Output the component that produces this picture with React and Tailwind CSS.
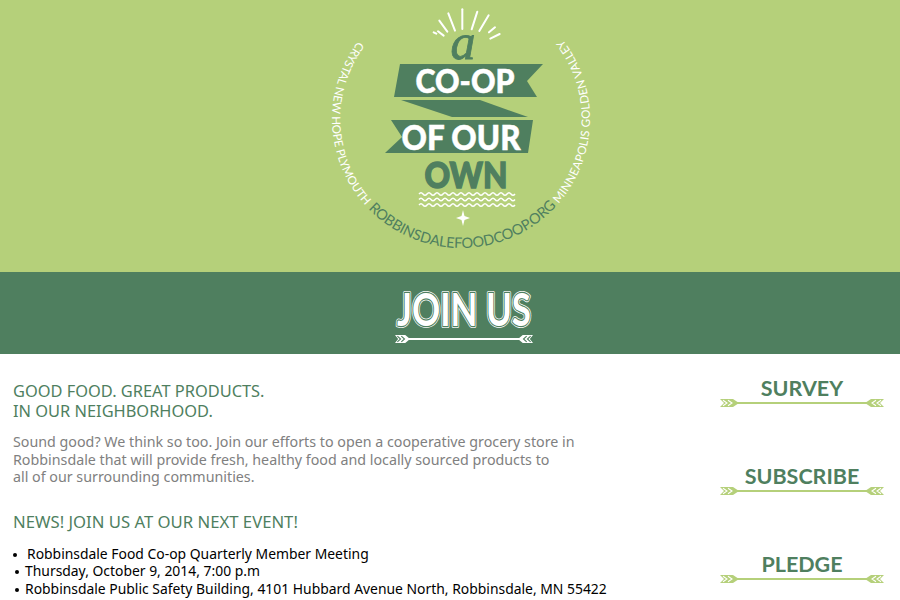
const GREEN = "#4f7f5f"
const LIME = "#b5d07a"

const rays = [
  [427, 28, 427, 87], [385, 40, 405, 92], [358, 62, 382, 95], [341, 97, 349, 101], [354, 94, 371, 107],
  [472, 35, 455, 88], [506, 46, 478, 93], [525, 82, 507, 97], [539, 102, 511, 116],
]

const waves = [194, 199.5, 205].map((y) => {
  let d = `M419 ${y}`
  for (let x = 419; x < 511; x += 8) d += ` q2 -2.6 4 0 t4 0`
  return d
})

function Logo() {
  return (
    <svg viewBox="300 0 300 272" className="w-[300px] h-[272px] mx-auto">
      <defs>
        <path id="ring" d="M358 41.4 A129 129 0 1 0 556.9 32.7" />
      </defs>
      <g transform="translate(320 0) scale(0.3333)">
        {rays.map((r, i) => (
          <line key={i} x1={r[0]} y1={r[1]} x2={r[2]} y2={r[3]} stroke="#fff" strokeWidth="6" strokeLinecap="round" />
        ))}
      </g>
      <text x="463" y="59" textAnchor="middle" fontFamily="'Liberation Serif', serif" fontStyle="italic" fontSize="50" fill={GREEN} stroke={GREEN} strokeWidth="0.8">a</text>

      <polygon points="400,64 543,64 527,81 537,97 394,97" fill={GREEN} />
      <polygon points="401,100 480,100 528,117 452,117" fill={GREEN} />
      <polygon points="391,120 533,120 528,153 385,153 402,137" fill={GREEN} />

      <text x="465" y="93" textAnchor="middle" fontFamily="Lato, sans-serif" fontWeight="900" fontSize="32" fill="#fff" stroke="#fff" strokeWidth="0.5" textLength="99" lengthAdjust="spacingAndGlyphs">CO-OP</text>
      <text x="461" y="150" textAnchor="middle" fontFamily="Lato, sans-serif" fontWeight="900" fontSize="34" fill="#fff" stroke="#fff" strokeWidth="0.5" textLength="119" lengthAdjust="spacingAndGlyphs">OF OUR</text>
      <text x="466" y="188" textAnchor="middle" fontFamily="Lato, sans-serif" fontWeight="900" fontSize="36" fill={GREEN} stroke={GREEN} strokeWidth="1.4" textLength="83" lengthAdjust="spacingAndGlyphs">OWN</text>

      {waves.map((d, i) => (
        <path key={i} d={d} fill="none" stroke="#fff" strokeWidth="1.4" />
      ))}
      <path d="M463 210 L464.5 216 L470 218 L464.5 220 L463 226 L461.5 220 L456 218 L461.5 216 Z" fill="#fff" />

      <g fontFamily="Lato, sans-serif">
        <text fill="#fff" fontSize="11.6">
          <textPath href="#ring" startOffset="0" textLength="178">CRYSTAL NEW HOPE PLYMOUTH</textPath>
        </text>
        <text fill={GREEN} fontSize="14.5">
          <textPath href="#ring" startOffset="182" textLength="211">ROBBINSDALEFOODCOOP.ORG</textPath>
        </text>
        <text fill="#fff" fontSize="11.6">
          <textPath href="#ring" startOffset="396" textLength="178">MINNEAPOLIS GOLDEN VALLEY</textPath>
        </text>
      </g>
    </svg>
  )
}

function JoinUs() {
  return (
    <svg viewBox="380 280 170 70" className="w-[170px] h-[70px]">
      <g fontFamily="Lato, sans-serif" fontWeight="700" fontSize="46" textAnchor="middle">
        <text x="464" y="326" fill="none" stroke="#fff" strokeWidth="4" strokeLinejoin="round" textLength="134" lengthAdjust="spacingAndGlyphs">JOIN US</text>
        <text x="464" y="326" fill="none" stroke={GREEN} strokeWidth="2.4" strokeLinejoin="round" textLength="134" lengthAdjust="spacingAndGlyphs">JOIN US</text>
        <text x="464" y="326" fill="#fff" textLength="134" lengthAdjust="spacingAndGlyphs">JOIN US</text>
      </g>
      <g transform="translate(395 333)">
        <Arrow width={138} color="#fff" bg={GREEN} fletch={15} />
      </g>
    </svg>
  )
}

// two fletchings and a shaft, the right end is the left one flipped
function Fletching({ color, bg, w }) {
  const u = w / 19
  return (
    <g>
      <polygon points={`0,2 ${13 * u},2 ${19 * u},6 ${13 * u},10 0,10 ${4 * u},6`} fill={color} />
      <path d={`M${3 * u} 3.2 L${7 * u} 6 L${3 * u} 8.8 M${8 * u} 3.2 L${12 * u} 6 L${8 * u} 8.8`} fill="none" stroke={bg} strokeWidth="1.1" />
    </g>
  )
}

function Arrow({ width, color, bg, fletch }) {
  return (
    <g>
      <line x1={fletch - 2} y1="6" x2={width - fletch + 2} y2="6" stroke={color} strokeWidth="2" />
      <Fletching color={color} bg={bg} w={fletch} />
      <g transform={`translate(${width} 0) scale(-1 1)`}>
        <Fletching color={color} bg={bg} w={fletch} />
      </g>
    </g>
  )
}

function SideLink({ label }) {
  return (
    <a className="block w-[164px] text-center">
      <div className="text-[21.5px] leading-[22px] font-bold text-[#4f7f5f] font-['Lato',sans-serif]">{label}</div>
      <svg viewBox="0 2 164 8" className="block w-[164px] h-[8px]">
        <Arrow width={164} color={LIME} bg="#fff" fletch={19} />
      </svg>
    </a>
  )
}

function Bullet({ className }) {
  return <span className={"inline-block w-[4px] h-[4px] rounded-full bg-black align-middle " + className}></span>
}

export default function App() {
  return (
    <div className="w-[900px] h-[600px] overflow-hidden bg-white font-['Noto_Sans',sans-serif]">
      <div className="h-[272px] bg-[#b5d07a]">
        <Logo />
      </div>
      <div className="h-[82px] bg-[#4f7f5f] pt-[8px] pl-[380px]">
        <JoinUs />
      </div>
      <div className="flex justify-between">
        <div className="pl-[13px] pt-[27px]">
          <h1 className="text-[16.4px] leading-[20px] text-[#4f7f5f]">
            GOOD FOOD. GREAT PRODUCTS.<br />IN OUR NEIGHBORHOOD.
          </h1>
          <p className="mt-[12px] text-[14.27px] leading-[17.5px] text-[#808080]">
            Sound good? We think so too. Join our efforts to open a cooperative grocery store in<br />
            Robbinsdale that will provide fresh, healthy food and locally sourced products to<br />
            all of our surrounding communities.
          </p>
          <h2 className="mt-[26px] text-[16.7px] leading-[20px] text-[#4f7f5f]">NEWS! JOIN US AT OUR NEXT EVENT!</h2>
          <ul className="mt-[13px] text-[13.9px] leading-[17.5px] text-black">
            <li><Bullet className="mr-[10px]" />Robbinsdale Food Co-op Quarterly Member Meeting</li>
            <li><Bullet className="ml-[2px] mr-[6px]" />Thursday, October 9, 2014, 7:00 p.m</li>
            <li><Bullet className="ml-[2px] mr-[6px]" />Robbinsdale Public Safety Building, 4101 Hubbard Avenue North, Robbinsdale, MN 55422</li>
          </ul>
        </div>
        <div className="flex flex-col gap-[58px] pt-[23px] pr-[16px]">
          <SideLink label="SURVEY" />
          <SideLink label="SUBSCRIBE" />
          <SideLink label="PLEDGE" />
        </div>
      </div>
    </div>
  )
}
